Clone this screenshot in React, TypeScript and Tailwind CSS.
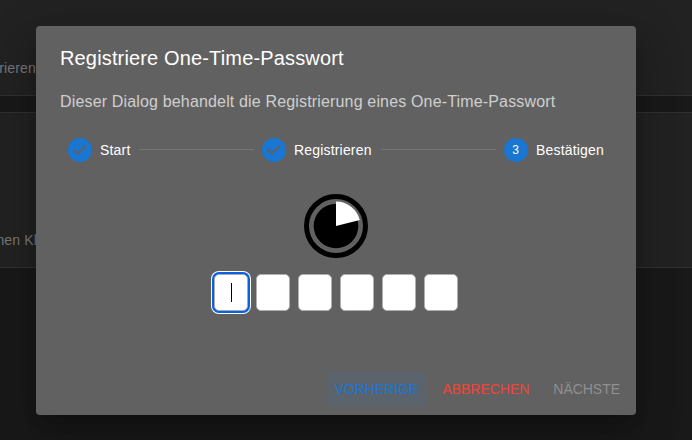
import React from "react";

const CHECK =
  "M12 0a12 12 0 1 0 0 24 12 12 0 0 0 0-24zm-2 17l-5-5 1.4-1.4 3.6 3.6 7.6-7.6L19 8l-9 9z";

function Step({
  label,
  width,
  done,
  index,
}: {
  label: string;
  width: string;
  done?: boolean;
  index?: number;
}) {
  return (
    <div className="flex items-center px-2">
      <svg width="24" height="24" viewBox="0 0 24 24" className="mr-2 shrink-0">
        {done ? (
          <path d={CHECK} fill="#1976d2" />
        ) : (
          <>
            <circle cx="12" cy="12" r="12" fill="#1976d2" />
            <text x="11.5" y="16" textAnchor="middle" fontSize="12" fill="#fff">
              {index}
            </text>
          </>
        )}
      </svg>
      <span className={`whitespace-nowrap text-[14px] leading-5 tracking-[0.18px] text-white ${width}`}>
        {label}
      </span>
    </div>
  );
}

function Connector() {
  return <div className="mb-px h-px flex-1 bg-[#757575]" />;
}

function Timer() {
  return (
    <svg width="64" height="64" viewBox="0 0 64 64">
      <circle cx="32" cy="32" r="29.5" fill="none" stroke="#000" strokeWidth="5" />
      <circle cx="32" cy="32" r="22.3" fill="#000" />
      <path d="M32 32V7.5A24.5 24.5 0 0 1 55.8 26z" fill="#fff" />
    </svg>
  );
}

export default function App() {
  return (
    <div className="relative h-[440px] w-[692px] overflow-hidden bg-[#191919] font-['Liberation_Sans',Arial,sans-serif]">
      <div className="flex h-full flex-col text-[14px] leading-5 text-[#777]">
        <div className="h-24 border-b border-[#303030] bg-[#222] pt-[58px]">
          <div className="flex w-9 justify-end whitespace-nowrap tracking-[0.15px]">rieren</div>
        </div>
        <div className="mt-4 h-[156px] border-y border-[#303030] bg-[#222] pt-[117px]">
          <div className="flex w-[37px] justify-end whitespace-nowrap tracking-[0.15px]">nen Kl</div>
        </div>
      </div>

      <div className="absolute left-9 top-[26px] flex h-[389px] w-[600px] flex-col rounded bg-[#616161] shadow-[0_11px_15px_-7px_rgba(0,0,0,0.2),0_24px_38px_3px_rgba(0,0,0,0.14),0_9px_46px_8px_rgba(0,0,0,0.12)]">
        <h2 className="px-6 pt-4 text-[20px] leading-8 tracking-[0.15px] text-white">
          Registriere One-Time-Passwort
        </h2>
        <p className="px-6 pt-4 text-[16px] leading-6 tracking-[0.16px] text-[#cfcfcf]">
          Dieser Dialog behandelt die Registrierung eines One-Time-Passwort
        </p>
        <div className="mt-6 flex items-center px-6">
          <Step label="Start" width="w-[31px]" done />
          <Connector />
          <Step label="Registrieren" width="w-[79px]" done />
          <Connector />
          <Step label="Bestätigen" width="w-[68px]" index={3} />
        </div>
        <div className="mt-8 flex justify-center">
          <Timer />
        </div>
        <div className="mt-4 flex justify-center gap-2">
          <div className="flex h-[37px] w-[34px] items-center justify-center rounded-[5px] border border-[#aaa] bg-white shadow-[0_0_0_2px_#0561e6,0_0_0_3px_#fff]">
            <span className="h-[19px] w-px bg-black" />
          </div>
          {[1, 2, 3, 4, 5].map((n) => (
            <div key={n} className="h-[37px] w-[34px] rounded-[5px] border border-[#b0b0b0] bg-white" />
          ))}
        </div>
        <div className="mt-auto flex justify-end gap-2 p-2 text-[14px] leading-[24px] tracking-[-0.03px]">
          <button className="rounded bg-[#5b646d] px-2 py-1.5 text-[#1976d2]">VORHERIGE</button>
          <button className="px-2 py-1.5 text-[#f44336]">ABBRECHEN</button>
          <button className="px-2 py-1.5 text-[#909090]">NÄCHSTE</button>
        </div>
      </div>
    </div>
  );
}
